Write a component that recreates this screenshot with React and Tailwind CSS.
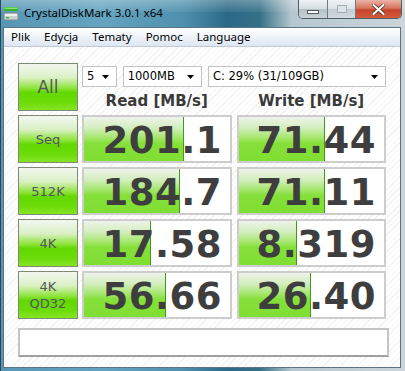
import { useState } from 'react';

const rows = [
  { label: ['Seq'], read: '201.1', readFill: 100, write: '71.44', writeFill: 86 },
  { label: ['512K'], read: '184.7', readFill: 96, write: '71.11', writeFill: 86 },
  { label: ['4K'], read: '17.58', readFill: 67, write: '8.319', writeFill: 58 },
  { label: ['4K', 'QD32'], read: '56.66', readFill: 82, write: '26.40', writeFill: 72 },
];

const greenButton =
  'flex flex-col items-center justify-center border border-[#7c8c74] bg-[linear-gradient(180deg,#f4f7f1_0%,#d9f0c4_30%,#8fe43c_52%,#62d800_62%,#6ddd0a_85%,#86e526_100%)] text-[#555560] leading-[17px]';

function Select({ value, width }) {
  return (
    <div
      className="flex h-[21px] items-center justify-between border border-[#c3c3c3] bg-white pl-[4px] pr-[7px] text-[11.5px] text-black"
      style={{ width }}
    >
      <span>{value}</span>
      <svg width="7" height="4" viewBox="0 0 7 4">
        <path d="M0 0h7L3.5 4z" fill="#000" />
      </svg>
    </div>
  );
}

function ScoreBox({ value, fill }) {
  return (
    <div className="relative h-[48px] border-2 border-[#cdcdcd] bg-white">
      <div
        className="absolute inset-y-0 left-0 border-r border-[#3f9a1c] bg-[linear-gradient(180deg,#eef3ea_0%,#d3eebd_25%,#a3e66a_48%,#85e03a_60%,#80df32_100%)]"
        style={{ width: fill }}
      />
      <div className="relative flex h-full items-center justify-end pr-[8px] pt-[3px] text-[37px] font-bold leading-none tracking-[0.5px] text-[#3e3e3e]">
        {value}
      </div>
    </div>
  );
}

function DriveIcon() {
  return (
    <svg width="16" height="16" viewBox="0 0 16 16">
      <rect x="1" y="2" width="14" height="4" rx="1" fill="#2fb52a" />
      <rect x="1.5" y="2.5" width="13" height="1.5" fill="#8ee07a" />
      <rect x="1" y="8" width="14" height="7" rx="1" fill="#c9cfd3" stroke="#7d868c" strokeWidth="0.8" />
      <rect x="2" y="9" width="12" height="2" fill="#eef1f3" />
      <rect x="3" y="12" width="3" height="1.5" fill="#39c22c" />
    </svg>
  );
}

export default function App() {
  const [comment] = useState('');

  return (
    <div
      className="flex h-[371px] w-[405px] flex-col overflow-hidden border-l border-[#29495a] bg-[linear-gradient(90deg,#5797b5_0%,#65a4c0_25%,#4f90ae_45%,#2b6987_56%,#357188_64%,#b6c7cf_72%,#cbd5da_100%)]"
      style={{ fontFamily: '"DejaVu Sans", Verdana, sans-serif' }}
    >
      <div className="relative flex h-[27px] shrink-0 items-start justify-between">
        <div className="absolute inset-x-0 top-0 h-[12px] bg-[linear-gradient(180deg,rgba(255,255,255,0.28),rgba(255,255,255,0.05))]" />
        <div className="relative flex items-center gap-[5px] pl-[2px] pt-[4px]">
          <DriveIcon />
          <span className="text-[11.5px] text-black" style={{ fontFamily: '"Noto Sans", sans-serif' }}>
            CrystalDiskMark 3.0.1 x64
          </span>
        </div>
        <div className="relative mr-[3px] flex h-[19px] overflow-hidden rounded-b-[5px] border border-t-0 border-[#4c5f6a]">
          <div className="flex w-[29px] items-center justify-center border-r border-[#6b7c86] bg-[linear-gradient(180deg,#eef2f4_0%,#d4dce0_50%,#b5c1c7_52%,#c9d3d8_100%)]">
            <div className="mt-[5px] h-[4px] w-[12px] border border-[#4f5b62] bg-white" />
          </div>
          <div className="flex w-[28px] items-center justify-center border-r border-[#6b7c86] bg-[linear-gradient(180deg,#eef2f4_0%,#dbe2e6_50%,#c4cdd2_52%,#d2dadf_100%)]">
            <div className="h-[8px] w-[10px] border border-[#a4adb3] bg-[#dfe4e7]" />
          </div>
          <div className="flex w-[45px] items-center justify-center bg-[linear-gradient(180deg,#eab3a6_0%,#d9735c_45%,#c4432b_55%,#d45a3c_100%)]">
            <svg width="13" height="11" viewBox="0 0 13 11">
              <path d="M1.5 1l10 9M11.5 1l-10 9" stroke="#4a2a22" strokeWidth="3.6" strokeLinecap="round" />
              <path d="M1.5 1l10 9M11.5 1l-10 9" stroke="#fff" strokeWidth="2.2" strokeLinecap="round" />
            </svg>
          </div>
        </div>
      </div>

      <div className="mb-[3px] ml-[2px] mr-[4px] flex flex-1 flex-col border border-[#5d7483] bg-white">
        <div
          className="flex h-[19px] shrink-0 items-center border-b border-[#c0cad6] bg-[linear-gradient(180deg,#ffffff_0%,#f0f4fa_45%,#dde6f2_100%)] text-[11.5px] text-black"
          style={{ fontFamily: '"Noto Sans", sans-serif' }}
        >
          {['Plik', 'Edycja', 'Tematy', 'Pomoc', 'Language'].map((item) => (
            <span className="px-[7px]" key={item}>
              {item}
            </span>
          ))}
        </div>

        <div className="flex flex-1 flex-col bg-[repeating-linear-gradient(135deg,#ffffff_0px,#ffffff_3px,#f2f2f2_3px,#f2f2f2_4px)] pl-[14px] pt-[16px]">
          <div className="grid grid-cols-[60px_150px_150px] gap-x-[4px] gap-y-[4px]">
            <div className={`${greenButton} h-[48px] text-[17px]`}>All</div>
            <div className="col-span-2 flex h-[48px] flex-col">
              <div className="mt-[3px] flex gap-[6px]">
                <Select value="5" width={35} />
                <Select value="1000MB" width={80} />
                <Select value="C: 29% (31/109GB)" width={180} />
              </div>
              <div className="mt-[5px] grid grid-cols-2 gap-x-[5px] text-[15px] font-bold leading-[19px] text-[#3a3a3a]">
                <span className="text-center">Read [MB/s]</span>
                <span className="text-center">Write [MB/s]</span>
              </div>
            </div>

            {rows.map((row) => (
              <div className="contents" key={row.label.join('-')}>
                <div className={`${greenButton} h-[48px] text-[13px]`}>
                  {row.label.map((line) => (
                    <span key={line}>{line}</span>
                  ))}
                </div>
                <ScoreBox value={row.read} fill={row.readFill} />
                <div className="ml-[1px]">
                  <ScoreBox value={row.write} fill={row.writeFill} />
                </div>
              </div>
            ))}
          </div>

          <div className="mt-[9px] h-[29px] w-[371px] border-2 border-[#c4c4c4] border-b-[#a0a0a0] bg-white">
            {comment}
          </div>
        </div>
      </div>
    </div>
  );
}
